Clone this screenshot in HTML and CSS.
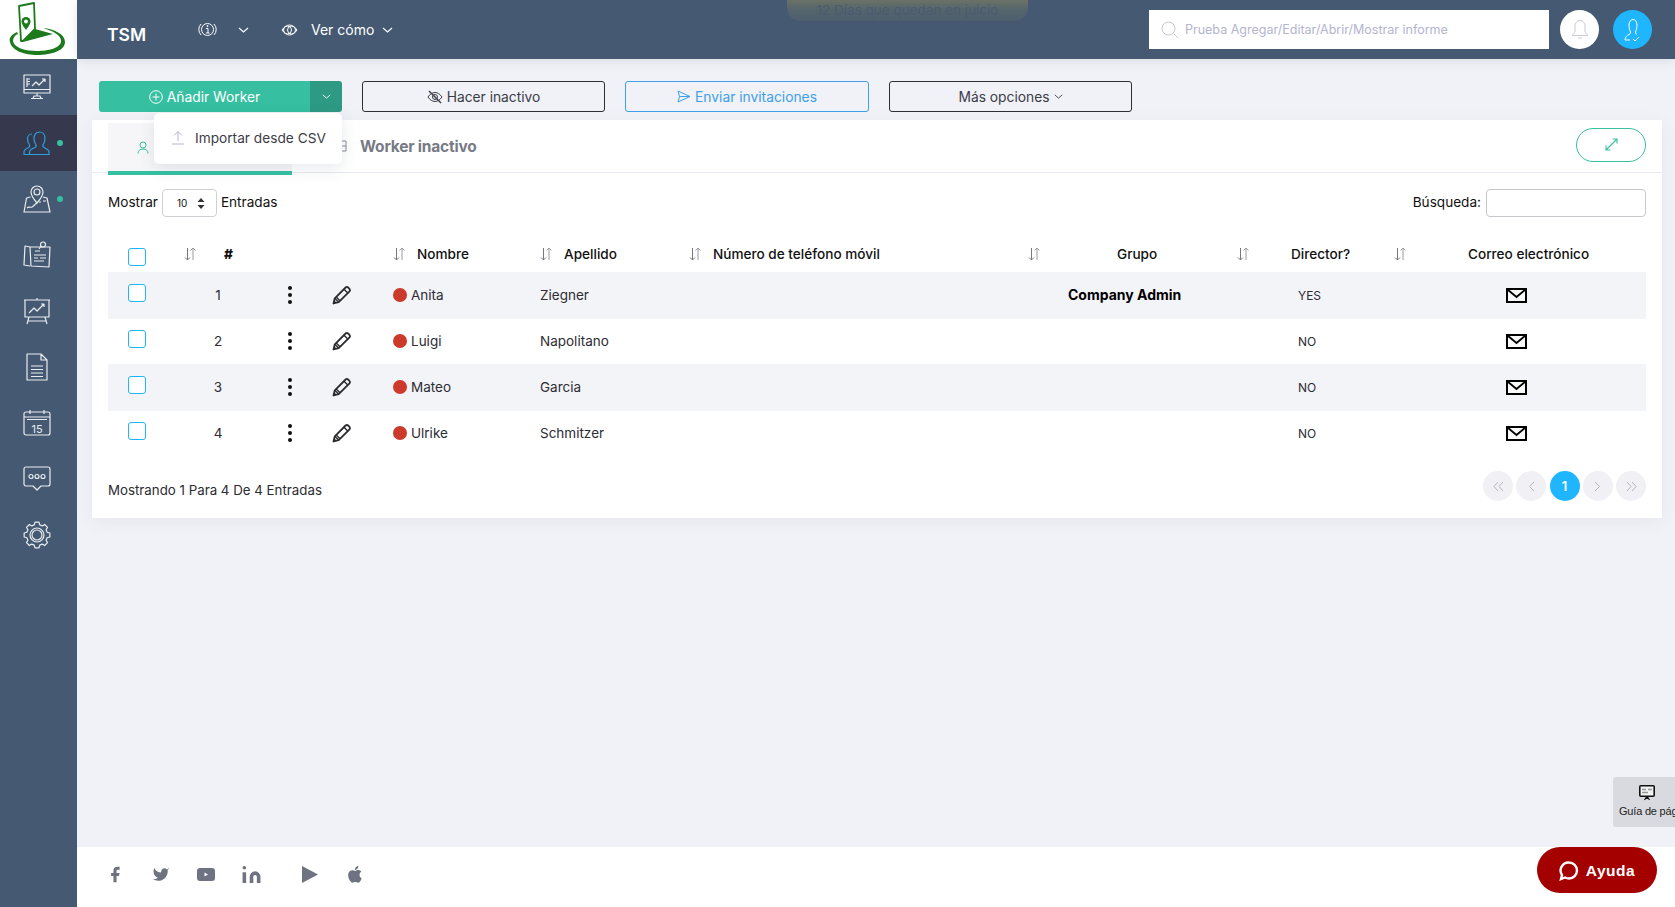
FILE: index.html
```html
<!DOCTYPE html>
<html lang="es">
<head>
    <meta charset="UTF-8">
    <meta name="viewport" content="width=device-width, initial-scale=1.0">
    <title>TSM - Workers</title>
    <link rel="stylesheet" href="styles.css">
</head>
<body>
    <svg class="defs" width="0" height="0">
        <symbol id="sort" viewBox="0 0 12 14">
            <path class="sort-down" d="M3.5 1v12M1 10.5L3.5 13L6 10.5"/>
            <path class="sort-up" d="M9 13V1M6.5 3.5L9 1L11.5 3.5"/>
        </symbol>
        <symbol id="pencil" viewBox="0 0 20 20">
            <path d="M1.5 18.5l1.3-5.2L13.6 2.5a1.8 1.8 0 0 1 2.5 0l1.4 1.4a1.8 1.8 0 0 1 0 2.5L6.7 17.2z" fill="none" stroke="#2b2b30" stroke-width="1.8" stroke-linejoin="round"/>
            <path d="M12 4.2l3.8 3.8M4.2 12l3.8 3.8M3 13.5l3.5 3.5" fill="none" stroke="#2b2b30" stroke-width="1.4"/>
            <path d="M1.5 18.5l.8-3.2 2.4 2.4z" fill="#2b2b30"/>
        </symbol>
        <symbol id="mail" viewBox="0 0 21 15">
            <rect x="1" y="1" width="19" height="13" fill="#fafafa" stroke="#000" stroke-width="2"/>
            <path d="M1.5 1.5L10.5 9L19.5 1.5" fill="none" stroke="#000" stroke-width="1.8"/>
        </symbol>
    </svg>

    <div class="app">
        <aside class="sidebar">
            <div class="logo">
                <svg width="77" height="59" viewBox="0 0 77 59">
                    <path d="M17 32C10 35 9 39 10 42C12 51 25 55 37 55C53 55 65 50 65 42C65 34 54 29 43 28C53 31 61 35 61 41C61 48 48 51 37 51C26 51 14 48 13 41C13 38 15 35 18 34z" fill="#1c7a1c"/>
                    <path d="M19 6L34 3L35 29L23 41L21 41z" fill="#fff" stroke="#1c7a1c" stroke-width="1.800" stroke-linejoin="round"/>
                    <path d="M35 29L53 34L23 42z" fill="#1c7a1c"/>
                    <path d="M26 17a4.500 4.500 0 0 1 4.500 4.500c0 3-4.500 8.500-4.500 8.500s-4.500-5.500-4.500-8.500a4.500 4.500 0 0 1 4.500-4.500z" fill="#1c7a1c"/>
                    <circle cx="26" cy="21.500" r="2" fill="#fff"/>
                </svg>
            </div>
            <nav class="side-nav">
                <a class="side-item">
                    <svg class="side-icon" viewBox="0 0 28 28"><rect x="1" y="2" width="26" height="18"/><path d="M1 16.500h26M14 20v3M8 25.500h12M10 25.500l1-2.500h6l1 2.500M4 5v9M4 6h3M4 8.500h3M4 11h3M9 13l4-4 3 3 6-6M19 6h3v3"/></svg>
                </a>
                <a class="side-item active">
                    <svg class="side-icon" viewBox="0 0 28 28"><path d="M9 25.500H1v-2.500c0-2 1.500-3 4-4 1.500-.6 2-1.500 1.500-3C5 14 4.500 12 4.500 10c0-3 2-5 4.500-5"/><path d="M8 25.500v-2.500c0-2 2-3 5-4.200 1.500-.6 2-1.500 1.500-3-1.500-2-2-4-2-6.300 0-3.500 2-6.500 5.500-6.500s5.500 3 5.500 6.500c0 2.300-.5 4.300-2 6.300-.5 1.500 0 2.400 1.500 3 2.500 1.200 4.500 2.200 4.500 4.200v2.500z" transform="translate(-1.500 0)"/></svg>
                    <span class="side-dot"></span>
                </a>
                <a class="side-item">
                    <svg class="side-icon" viewBox="0 0 28 28"><path d="M14 1a6 6 0 0 1 6 6c0 4-6 11-6 11S8 11 8 7a6 6 0 0 1 6-6z"/><circle cx="14" cy="7" r="3"/><path d="M7.500 12L3.500 13L1 27h26l-3-14-4-1M4 23c2-2 3 0 5-1s3-3 5-4M16 17h2M20 16h3"/></svg>
                    <span class="side-dot"></span>
                </a>
                <a class="side-item">
                    <svg class="side-icon" viewBox="0 0 28 28"><path d="M7 6L2 5L1 24l6 1M7 6l20 0-1 20-18-1zM12 10h5M11 14h12M11 17h4M17 17h6M11 20h10"/><circle cx="20" cy="3.500" r="2.500"/><path d="M18 5l-2 3"/></svg>
                </a>
                <a class="side-item">
                    <svg class="side-icon" viewBox="0 0 28 28"><path d="M1 3h26M2 3v17h24V3M14 1v2M6 20l-2 7M22 20l2 7M5 24h18M6 16l5-5 3 3 7-7M18 7h3v3"/></svg>
                </a>
                <a class="side-item">
                    <svg class="side-icon" viewBox="0 0 28 28"><path d="M4 1h14l6 6v20H4zM18 1v6h6M8 13h12M8 16.500h12M8 20h12M8 23.500h12"/></svg>
                </a>
                <a class="side-item">
                    <svg class="side-icon" viewBox="0 0 28 28"><rect x="1" y="3" width="26" height="23" rx="2"/><path d="M7 1v4M21 1v4M1 8h26M4 10.500h20"/><text x="14" y="23.500" text-anchor="middle" class="cal-day">15</text></svg>
                </a>
                <a class="side-item">
                    <svg class="side-icon" viewBox="0 0 28 28"><path d="M3 2h22a2 2 0 0 1 2 2v15a2 2 0 0 1-2 2h-7l-4 4-4-4H3a2 2 0 0 1-2-2V4a2 2 0 0 1 2-2z"/><circle cx="8" cy="11.500" r="2"/><circle cx="14" cy="11.500" r="2"/><circle cx="20" cy="11.500" r="2"/></svg>
                </a>
                <a class="side-item">
                    <svg class="side-icon" viewBox="0 0 28 28"><path d="M26.840 11.970L26.840 16.030L24.140 16.720L23.090 19.250L24.520 21.640L21.640 24.520L19.250 23.090L16.720 24.140L16.030 26.840L11.970 26.840L11.280 24.140L8.750 23.090L6.360 24.520L3.480 21.640L4.910 19.250L3.860 16.720L1.160 16.030L1.160 11.970L3.860 11.280L4.910 8.750L3.480 6.360L6.360 3.480L8.750 4.910L11.280 3.860L11.970 1.160L16.030 1.160L16.720 3.860L19.250 4.910L21.640 3.480L24.520 6.360L23.090 8.750L24.140 11.280z"/><circle cx="14" cy="14" r="7"/><circle cx="14" cy="14" r="5"/></svg>
                </a>
            </nav>
        </aside>

        <div class="main">
            <header class="topbar">
                <div class="trial-banner">12 Días que quedan en juicio</div>
                <span class="brand">TSM</span>
                <svg class="info-icon" width="19" height="15" viewBox="0 0 19 15"><circle cx="9.500" cy="7.500" r="6"/><path d="M3 2a8 8 0 0 0 0 11M16 2a8 8 0 0 1 0 11M8 6.500h2v4.500M8 11h3.500"/><circle cx="9.500" cy="4" r=".6"/></svg>
                <svg class="chev chev-info" width="11" height="6" viewBox="0 0 11 6"><path d="M1 1l4.500 4L10 1"/></svg>
                <svg class="eye-icon" width="17" height="12" viewBox="0 0 17 12"><path d="M1 6c2-3 5-5 7.500-5s5.500 2 7.500 5c-2 3-5 5-7.500 5S3 9 1 6z"/><circle cx="6.500" cy="6" r="4"/><circle cx="10.500" cy="6" r="4"/></svg>
                <span class="ver-como">Ver cómo</span>
                <svg class="chev" width="11" height="6" viewBox="0 0 11 6"><path d="M1 1l4.500 4L10 1"/></svg>

                <label class="top-search">
                    <svg width="18" height="18" viewBox="0 0 18 18"><circle cx="7.500" cy="7.500" r="6.500"/><path d="M12.500 12.500L17 17"/></svg>
                    <span>Prueba Agregar/Editar/Abrir/Mostrar informe</span>
                </label>
                <div class="round-btn bell">
                    <svg width="18" height="22" viewBox="0 0 18 22"><path d="M9 1.500c-3 0-5 2.500-5 6v4.500c0 2-1.500 3-3 4.500h16c-1.500-1.500-3-2.500-3-4.500V7.500c0-3.500-2-6-5-6zM7 19h4"/></svg>
                </div>
                <div class="round-btn user">
                    <svg width="18" height="24" viewBox="0 0 18 24"><path d="M6 22H1c0-3 2-4.500 4-5.500 1.500-.8 2-2 1.200-3.500C5.200 11 5 9 5 7c0-3 1.500-5.500 4-5.500S13 4 13 7c0 2-.2 4-1.200 6-.8 1.500-.3 2.700 1.200 3.500"/><path d="M9 21l2 2 4-4"/></svg>
                </div>
            </header>

            <main class="content">
                <div class="toolbar">
                    <div class="split-btn">
                        <button class="btn-add">
                            <svg width="14" height="14" viewBox="0 0 14 14"><circle cx="7" cy="7" r="6.300"/><path d="M7 3.500v7M3.500 7h7"/></svg>
                            Añadir Worker
                        </button>
                        <button class="btn-caret"><svg class="chev" width="9" height="5" viewBox="0 0 11 6"><path d="M1 1l4.500 4L10 1"/></svg></button>
                        <div class="dropdown">
                            <svg width="12" height="15" viewBox="0 0 12 15"><path d="M6 11V1.500M2 5.500l4-4 4 4M0 14h12"/></svg>
                            <span>Importar desde CSV</span>
                        </div>
                    </div>
                    <button class="btn-outline">
                        <svg width="16" height="14" viewBox="0 0 16 14"><path d="M1 7c2-3 4.500-4.500 7-4.500S13 4 15 7c-2 3-4.500 4.500-7 4.500S3 10 1 7z"/><circle cx="8" cy="7" r="2.500"/><path d="M2 1l12 12" stroke-width="1.400"/></svg>
                        Hacer inactivo
                    </button>
                    <button class="btn-outline btn-blue">
                        <svg width="14" height="13" viewBox="0 0 14 13"><path d="M1 1l12 5.500L1 12l1.500-5.500zM2.500 6.500H13"/></svg>
                        Enviar invitaciones
                    </button>
                    <button class="btn-outline">
                        Más opciones
                        <svg class="chev" width="9" height="5" viewBox="0 0 11 6"><path d="M1 1l4.500 4L10 1"/></svg>
                    </button>
                </div>

                <section class="card">
                    <div class="tabs">
                        <div class="tab active" aria-label="Worker activo">
                            <svg width="12" height="13" viewBox="0 0 12 13"><circle cx="6" cy="4" r="3"/><path d="M1 12.500c0-3 2-4.500 5-4.500s5 1.500 5 4.500"/></svg>
                        </div>
                        <div class="tab">
                            <svg width="12" height="12" viewBox="0 0 12 12"><path d="M1 1h10v10H1zM1 6h10"/></svg>
                            <span>Worker inactivo</span>
                        </div>
                        <button class="expand-btn">
                            <svg width="13" height="13" viewBox="0 0 13 13"><path d="M1 12L12 1M7.500 1H12v4.500M1 7.500V12h4.500"/></svg>
                        </button>
                    </div>

                    <div class="filters">
                        <div class="filter-left">
                            <span class="filter-label">Mostrar</span>
                            <div class="len-select">
                                <span>10</span>
                                <svg width="8" height="11" viewBox="0 0 8 11"><path d="M4 0l3.500 4h-7zM4 11L.5 7h7z"/></svg>
                            </div>
                            <span class="filter-label">Entradas</span>
                        </div>
                        <div class="filter-right">
                            <span class="filter-label">Búsqueda:</span>
                            <div class="search-box"></div>
                        </div>
                    </div>

                    <table class="grid">
                        <colgroup>
                            <col class="c-check"><col class="c-num"><col class="c-dots"><col class="c-edit"><col class="c-name"><col class="c-last"><col class="c-phone"><col class="c-group"><col class="c-dir"><col class="c-mail">
                        </colgroup>
                        <thead>
                            <tr>
                                <th class="td-check"><span class="check"></span></th>
                                <th><svg class="sort sort-first" width="12" height="14"><use href="#sort"/></svg><span class="lbl-num">#</span></th>
                                <th></th>
                                <th></th>
                                <th><svg class="sort" width="12" height="14"><use href="#sort"/></svg><span class="lbl-name">Nombre</span></th>
                                <th><svg class="sort" width="12" height="14"><use href="#sort"/></svg><span class="lbl-name">Apellido</span></th>
                                <th><svg class="sort" width="12" height="14"><use href="#sort"/></svg><span class="lbl-name">Número de teléfono móvil</span></th>
                                <th><svg class="sort" width="12" height="14"><use href="#sort"/></svg><span class="lbl-group">Grupo</span></th>
                                <th><svg class="sort" width="12" height="14"><use href="#sort"/></svg><span class="lbl-dir">Director?</span></th>
                                <th><svg class="sort" width="12" height="14"><use href="#sort"/></svg><span class="lbl-mail">Correo electrónico</span></th>
                            </tr>
                        </thead>
                        <tbody>
                            <tr>
                                <td class="td-check"><span class="check"></span></td>
                                <td class="td-num">1</td>
                                <td class="td-dots"><span class="dots"></span></td>
                                <td><svg class="edit" width="20" height="20"><use href="#pencil"/></svg></td>
                                <td><span class="status"></span>Anita</td>
                                <td>Ziegner</td>
                                <td></td>
                                <td class="td-group">Company Admin</td>
                                <td class="td-dir">YES</td>
                                <td class="td-mail"><svg width="21" height="15"><use href="#mail"/></svg></td>
                            </tr>
                            <tr>
                                <td class="td-check"><span class="check"></span></td>
                                <td class="td-num">2</td>
                                <td class="td-dots"><span class="dots"></span></td>
                                <td><svg class="edit" width="20" height="20"><use href="#pencil"/></svg></td>
                                <td><span class="status"></span>Luigi</td>
                                <td>Napolitano</td>
                                <td></td>
                                <td class="td-group"></td>
                                <td class="td-dir">NO</td>
                                <td class="td-mail"><svg width="21" height="15"><use href="#mail"/></svg></td>
                            </tr>
                            <tr>
                                <td class="td-check"><span class="check"></span></td>
                                <td class="td-num">3</td>
                                <td class="td-dots"><span class="dots"></span></td>
                                <td><svg class="edit" width="20" height="20"><use href="#pencil"/></svg></td>
                                <td><span class="status"></span>Mateo</td>
                                <td>Garcia</td>
                                <td></td>
                                <td class="td-group"></td>
                                <td class="td-dir">NO</td>
                                <td class="td-mail"><svg width="21" height="15"><use href="#mail"/></svg></td>
                            </tr>
                            <tr>
                                <td class="td-check"><span class="check"></span></td>
                                <td class="td-num">4</td>
                                <td class="td-dots"><span class="dots"></span></td>
                                <td><svg class="edit" width="20" height="20"><use href="#pencil"/></svg></td>
                                <td><span class="status"></span>Ulrike</td>
                                <td>Schmitzer</td>
                                <td></td>
                                <td class="td-group"></td>
                                <td class="td-dir">NO</td>
                                <td class="td-mail"><svg width="21" height="15"><use href="#mail"/></svg></td>
                            </tr>
                        </tbody>
                    </table>

                    <div class="table-foot">
                        <span class="info-text">Mostrando 1 Para 4 De 4 Entradas</span>
                        <div class="pager">
                            <span class="page"><svg width="11" height="11" viewBox="0 0 11 11"><path d="M5 1L1 5.500 5 10M10 1L6 5.500 10 10"/></svg></span>
                            <span class="page"><svg width="7" height="11" viewBox="0 0 7 11"><path d="M6 1L1.500 5.500 6 10"/></svg></span>
                            <span class="page current">1</span>
                            <span class="page"><svg width="7" height="11" viewBox="0 0 7 11"><path d="M1 1l4.500 4.500L1 10"/></svg></span>
                            <span class="page"><svg width="11" height="11" viewBox="0 0 11 11"><path d="M1 1l4 4.500L1 10M6 1l4 4.500L6 10"/></svg></span>
                        </div>
                    </div>
                </section>
            </main>

            <footer class="footer">
                <svg class="soc soc-f" width="16" height="17" viewBox="4 1 16 22"><path d="M18 2h-3a5 5 0 0 0-5 5v3H7v4h3v8h4v-8h3l1-4h-4V7a1 1 0 0 1 1-1h3z"/></svg>
                <svg class="soc soc-t" width="18" height="16" viewBox="0 2 24 20"><path d="M23 3a10.900 10.900 0 0 1-3 3 4.480 4.480 0 0 0-7.860 3v1A10.660 10.660 0 0 1 3 4s-4 9 5 13a11.640 11.640 0 0 1-7 2c9 5 20 0 20-11.500a4.500 4.500 0 0 0-.08-.83A7.720 7.720 0 0 0 23 3z"/></svg>
                <svg class="soc soc-y" width="18" height="13" viewBox="0 0 18 13"><path fill-rule="evenodd" d="M3 0h12a3 3 0 0 1 3 3v7a3 3 0 0 1-3 3H3a3 3 0 0 1-3-3V3a3 3 0 0 1 3-3zM7.500 4.500v4l3.500-2z"/></svg>
                <svg class="soc soc-i" width="19" height="17" viewBox="2 2 20 19"><path d="M16 8a6 6 0 0 1 6 6v7h-4v-7a2 2 0 0 0-2-2 2 2 0 0 0-2 2v7h-4v-7a6 6 0 0 1 6-6z"/><rect x="2" y="9" width="4" height="12"/><circle cx="4" cy="4" r="2"/></svg>
                <svg class="soc soc-p" width="16" height="17" viewBox="0 0 16 17"><path d="M0 0l16 8.500L0 17z"/></svg>
                <svg class="soc soc-a" width="16" height="17" viewBox="3 1 17 21"><path d="M17.050 12.040c-.03-2.600 2.120-3.850 2.220-3.910-1.210-1.770-3.090-2.010-3.760-2.040-1.600-.16-3.120.94-3.930.94-.81 0-2.060-.92-3.390-.89-1.740.03-3.350 1.010-4.250 2.570-1.810 3.140-.46 7.800 1.300 10.350.86 1.250 1.890 2.650 3.240 2.600 1.300-.05 1.790-.84 3.360-.84 1.570 0 2.010.84 3.390.81 1.400-.02 2.280-1.270 3.140-2.530.99-1.450 1.400-2.860 1.420-2.930-.03-.01-2.720-1.040-2.750-4.130zM14.470 4.400c.72-.87 1.200-2.080 1.070-3.280-1.030.04-2.280.69-3.020 1.550-.66.77-1.240 2-1.090 3.180 1.150.09 2.330-.59 3.040-1.450z"/></svg>
            </footer>

            <div class="page-guide">
                <svg width="16" height="16" viewBox="0 0 16 16"><rect x=".8" y=".8" width="14.400" height="10.400" rx="1" fill="#f2f2f4" stroke="#111" stroke-width="1.600"/><path d="M3 4.500h4M9 4.500h4M3 7.500h6" stroke="#999" stroke-width="1.500"/><path d="M8 11v3M5.500 15l2-3M10.500 15l-2-3" stroke="#111" stroke-width="1.200"/></svg>
                <span>Guía de pág</span>
            </div>
            <div class="help-btn">
                <svg width="20" height="20" viewBox="0 0 20 20"><path d="M10 1.500a8 8 0 0 1 0 16c-1.500 0-2.800-.3-4-1L2 18l1-4a8 8 0 0 1 7-12.500z"/></svg>
                <span>Ayuda</span>
            </div>
        </div>
    </div>
</body>
</html>
```

FILE: styles.css
```css
* {
    box-sizing: border-box;
}
body {
    margin: 0;
    font-family: Inter, "Liberation Sans", sans-serif;
    font-size: 13px;
    color: #2c2c33;
    background: #f0f2f7;
}
.defs {
    position: absolute;
}
.app {
    display: grid;
    grid-template-columns: 77px 1fr;
    height: 907px;
    overflow: hidden;
}

/* sidebar */
.sidebar {
    background: #455a72;
}
.logo {
    height: 59px;
    background: white;
}
.logo svg {
    display: block;
}
.side-item {
    height: 56px;
    display: flex;
    align-items: center;
    justify-content: center;
    padding-right: 3px;
    position: relative;
    color: #e9ecf0;
}
.side-item.active {
    background: #36394d;
    color: #2a9fe0;
}
.side-icon {
    width: 28px;
    height: 28px;
    fill: none;
    stroke: currentColor;
    stroke-width: 1.200;
    stroke-linejoin: round;
}
.cal-day {
    font-size: 11px;
    fill: currentColor;
    stroke: none;
}
.side-dot {
    position: absolute;
    left: 57px;
    top: 25px;
    width: 6px;
    height: 6px;
    border-radius: 50%;
    background: #36bfa1;
}

/* top bar */
.main {
    display: flex;
    flex-direction: column;
    position: relative;
    min-width: 0;
}
.topbar {
    height: 59px;
    flex: none;
    background: #455a72;
    display: flex;
    align-items: center;
    padding: 0 23px 0 30px;
    color: white;
    position: relative;
    box-shadow: 0 2px 10px rgba(60,70,90,0.12);
}
.trial-banner {
    position: absolute;
    left: 710px;
    top: 0;
    width: 241px;
    height: 21px;
    border-radius: 0 0 14px 14px;
    background: linear-gradient(#6b7266, #55656c 45%, #4d5f6f);
    color: #4a5b70;
    font-size: 13.500px;
    text-align: center;
    line-height: 20px;
}
.brand {
    font-size: 17.500px;
    font-weight: 600;
    padding-top: 9px;
    width: 91px;
}
.topbar svg {
    fill: none;
    stroke: currentColor;
}
.chev {
    fill: none;
    stroke: currentColor;
    stroke-width: 1.100;
}
.chev-info {
    margin: 0 32px 0 21px;
}
.eye-icon {
    margin-right: 13px;
}
.ver-como {
    font-size: 14px;
    margin-right: 8px;
}
.top-search {
    margin-left: auto;
    width: 400px;
    height: 39px;
    background: white;
    display: flex;
    align-items: center;
    gap: 6px;
    padding-left: 12px;
    color: #b3b4d0;
    font-size: 12.500px;
}
.top-search svg {
    stroke: #c5c8d6;
}
.round-btn {
    width: 39px;
    height: 39px;
    border-radius: 50%;
    display: flex;
    align-items: center;
    justify-content: center;
}
.bell {
    background: white;
    margin-left: 11px;
}
.bell svg {
    stroke: #c9c9da;
}
.user {
    background: #1fb6ff;
    margin-left: 14px;
}

/* toolbar */
.content {
    flex: 1;
    padding: 22px 13px 0 15px;
    min-height: 0;
}
.toolbar {
    display: flex;
    gap: 20px;
    padding-left: 7px;
    height: 31px;
    position: relative;
    z-index: 2;
}
button {
    font-family: inherit;
    font-size: 13.800px;
}
.split-btn {
    display: flex;
    width: 243px;
    position: relative;
}
.btn-add {
    flex: 1;
    background: #36bfa1;
    border: none;
    color: white;
    border-radius: 3px 0 0 3px;
    display: flex;
    align-items: center;
    justify-content: center;
    gap: 4px;
}
.btn-add svg {
    fill: none;
    stroke: white;
    stroke-width: 1;
}
.btn-caret {
    width: 32px;
    background: #2e9a83;
    border: none;
    color: white;
    border-radius: 0 3px 3px 0;
    display: flex;
    align-items: center;
    justify-content: center;
}
.dropdown {
    position: absolute;
    left: 55px;
    top: 32px;
    width: 188px;
    height: 51px;
    background: white;
    border-radius: 5px;
    box-shadow: 0 4px 16px rgba(60,70,90,0.12);
    display: flex;
    align-items: center;
    gap: 11px;
    padding: 0 0 2px 18px;
    font-size: 13.700px;
    color: #3c3c46;
}
.dropdown svg {
    fill: none;
    stroke: #b9b6d3;
}
.btn-outline {
    width: 243px;
    background: transparent;
    border: 1px solid #2e2e35;
    border-radius: 3px;
    color: #3c3c46;
    display: flex;
    align-items: center;
    justify-content: center;
    gap: 4px;
}
.btn-outline svg {
    fill: none;
    stroke: currentColor;
}
.btn-blue {
    width: 244px;
    border-color: #3f9fe8;
    color: #3f9fe8;
}

/* card */
.card {
    margin-top: 8px;
    width: 1570px;
    height: 398px;
    background: white;
    box-shadow: 0 4px 18px rgba(60,70,90,0.06);
    padding: 0 16px;
}
.tabs {
    display: flex;
    align-items: flex-start;
    height: 53px;
    margin: 0 -16px;
    padding: 3px 16px 0;
    border-bottom: 1px solid #e8e9ee;
    position: relative;
}
.tab {
    height: 46px;
    display: flex;
    align-items: center;
    font-size: 15.500px;
    font-weight: 700;
    color: #777a85;
    letter-spacing: -0.2px;
    gap: 13px;
}
.tab svg {
    fill: none;
    stroke: #8a8c96;
    flex: none;
}
.tab.active {
    width: 184px;
    height: 52px;
    background: #f6f6f8;
    border-bottom: 4px solid #36bfa1;
    padding: 0 0 0 29px;
    margin-right: 43px;
}
.tab.active svg {
    stroke: #36bfa1;
}
.expand-btn {
    margin: 5px 0 0 auto;
    width: 70px;
    height: 34px;
    padding-top: 3px;
    background: white;
    border: 1px solid #36bfa1;
    border-radius: 17px;
}
.expand-btn svg {
    fill: none;
    stroke: #36bfa1;
    stroke-width: 1.100;
}
.filters {
    display: flex;
    justify-content: space-between;
    margin-top: 16px;
    height: 28px;
    font-size: 13.600px;
    color: #111;
}
.filter-left,
.filter-right {
    display: flex;
    align-items: center;
    gap: 4px;
}
.filter-label {
    padding-bottom: 3px;
}
.filter-right .filter-label {
    margin-right: 1px;
}
.len-select {
    width: 55px;
    height: 28px;
    border: 1px solid #d0d0d4;
    border-radius: 4px;
    display: flex;
    align-items: center;
    justify-content: space-between;
    padding: 0 11px 0 14px;
    font-size: 10px;
}
.len-select svg {
    fill: #333;
}
.search-box {
    width: 160px;
    height: 28px;
    border: 1px solid #c8c8cc;
    border-radius: 4px;
}

/* table */
.grid {
    width: 1538px;
    margin-top: 19px;
    border-collapse: collapse;
    table-layout: fixed;
}
.c-check { width: 76px; }
.c-num { width: 86px; }
.c-dots { width: 40px; }
.c-edit { width: 83px; }
.c-name { width: 147px; }
.c-last { width: 149px; }
.c-phone { width: 339px; }
.c-group { width: 209px; }
.c-dir { width: 157px; }
.c-mail { width: 252px; }
.grid th {
    height: 36px;
    padding: 0;
    text-align: left;
    font-size: 13.600px;
    font-weight: 500;
    color: #111;
    white-space: nowrap;
}
.grid td {
    padding: 0 0 2px;
    height: 45px;
    font-size: 13.500px;
}
.grid tbody tr:nth-child(odd) td {
    height: 47px;
    background: #f3f4f8;
}
.grid tbody tr:nth-child(even) td {
    height: 45px;
}
.grid tbody tr:nth-child(4) td {
    background: white;
}
.sort {
    vertical-align: middle;
    margin-bottom: 1px;
}
.sort-down,
.sort-up {
    fill: none;
    stroke-width: 1;
}
.sort-down {
    stroke: #777781;
}
.sort-up {
    stroke: #9a9aa3;
}
.sort-first .sort-up {
    stroke: #7c2a2a;
}
.lbl-num { margin-left: 28px; font-weight: 800; }
.lbl-name { margin-left: 12px; }
.lbl-group { margin-left: 77px; }
.lbl-dir { margin-left: 42px; }
.lbl-mail { margin-left: 62px; }
.td-check {
    padding-left: 20px !important;
}
th.td-check {
    padding-top: 6px !important;
}
td.td-check {
    padding-bottom: 5px !important;
}
.check {
    display: block;
    width: 18px;
    height: 18px;
    border: 1.500px solid #1fb6ff;
    border-radius: 3px;
    background: white;
}
.td-num {
    padding-right: 18px !important;
    text-align: center;
}
.td-dots {
    padding-left: 18px !important;
}
.dots {
    display: block;
    width: 4px;
    height: 4px;
    border-radius: 50%;
    background: #111;
    box-shadow: 0 -7px 0 #111, 0 7px 0 #111;
}
.edit {
    display: block;
    margin-left: 22px;
}
.status {
    display: inline-block;
    width: 14px;
    height: 14px;
    border-radius: 50%;
    background: #cb3a2b;
    margin-right: 4px;
    vertical-align: -2px;
}
.td-group {
    padding-left: 40px !important;
    font-size: 14px !important;
    font-weight: 700;
    color: #000;
    white-space: nowrap;
}
.td-dir {
    padding: 0 0 0 61px !important;
    font-size: 12px !important;
}
.td-mail {
    padding: 0 0 0 112px !important;
}
.td-mail svg {
    display: block;
}
.table-foot {
    display: flex;
    justify-content: space-between;
    align-items: center;
    margin-top: 15px;
}
.info-text {
    padding-top: 8px;
    font-size: 13.300px;
}
.pager {
    display: flex;
    gap: 3.250px;
}
.page {
    width: 30px;
    height: 30px;
    border-radius: 50%;
    background: #f1f1f5;
    display: flex;
    align-items: center;
    justify-content: center;
    font-size: 13px;
    font-weight: 600;
}
.page svg {
    fill: none;
    stroke: #b5b5c0;
}
.page.current {
    background: #1fb6ff;
    color: white;
}

/* footer */
.footer {
    height: 60px;
    flex: none;
    background: white;
    display: flex;
    align-items: center;
    padding: 0 0 6px 30px;
}
.soc {
    fill: #6f7280;
    flex: none;
}
.soc-f { margin-right: 29px; }
.soc-t { margin-right: 27px; }
.soc-y { margin-right: 27px; }
.soc-i { margin-right: 41px; }
.soc-p { margin-right: 29px; }
.page-guide {
    position: absolute;
    left: 1536px;
    top: 777px;
    width: 62px;
    height: 50px;
    background: #d9dae0;
    border-radius: 3px 0 0 3px;
    overflow: hidden;
    font-family: "Liberation Sans", sans-serif;
    font-size: 11px;
    letter-spacing: -0.2px;
    color: #222;
    padding: 8px 0 0 6px;
    white-space: nowrap;
}
.page-guide svg {
    display: block;
    margin: 0 0 4px 20px;
}
.help-btn {
    position: absolute;
    left: 1460px;
    top: 847px;
    width: 120px;
    height: 46px;
    padding-top: 1px;
    border-radius: 23px;
    background: #a50000;
    color: white;
    display: flex;
    align-items: center;
    justify-content: center;
    gap: 7px;
    font-family: "Liberation Sans", sans-serif;
    font-size: 15.500px;
    font-weight: 700;
    letter-spacing: 0.500px;
}
.help-btn svg {
    fill: none;
    stroke: white;
    stroke-width: 2.400;
}
```
